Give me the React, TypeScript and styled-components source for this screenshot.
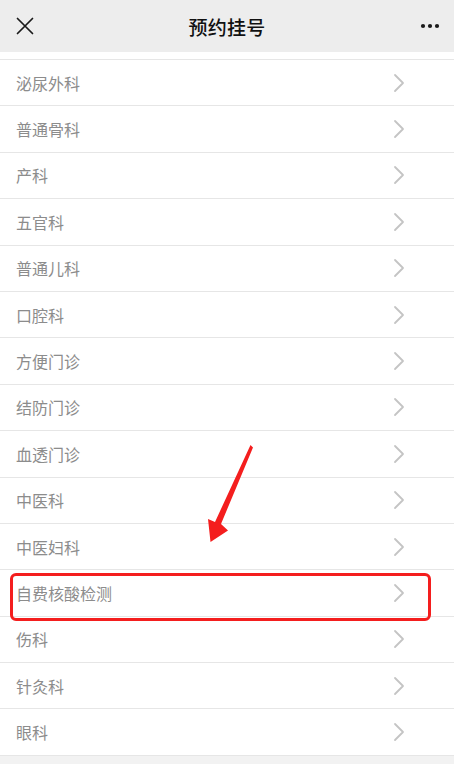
import React from "react";
import styled, { createGlobalStyle } from "styled-components";

const Global = createGlobalStyle`
  html, body { margin: 0; padding: 0; background: #f2f2f2; }
  body { font-family: "Noto Sans CJK SC", "Noto Sans", sans-serif; }
  * { box-sizing: border-box; }
`;

const Page = styled.div`
  position: relative;
  width: 454px;
  height: 764px;
  overflow: hidden;
  background: #f2f2f2;
`;

const Header = styled.header`
  height: 52px;
  background: #ededed;
  display: grid;
  grid-template-columns: 60px 1fr 60px;
  align-items: center;
`;

const Title = styled.div`
  text-align: center;
  font-size: 19px;
  font-weight: 500;
  color: #111;
  letter-spacing: 0.3px;
`;

const IconBox = styled.div<{ $align: "start" | "end" }>`
  display: flex;
  justify-content: ${(p) => (p.$align === "start" ? "flex-start" : "flex-end")};
  padding: ${(p) => (p.$align === "start" ? "0 0 0 16px" : "0 14px 0 0")};
  align-items: center;
`;

const TopStrip = styled.div`
  height: 8px;
  background: #fff;
  border-bottom: 1px solid #e6e6e6;
`;

const List = styled.ul`
  list-style: none;
  margin: 0;
  padding: 0;
  background: #fff;
`;

const Row = styled.li`
  height: 46.4px;
  display: flex;
  align-items: center;
  justify-content: space-between;
  padding: 0 49px 0 16px;
  border-bottom: 1px solid #e6e6e6;
  font-size: 16px;
  color: #8c8c8c;
`;

const Highlight = styled.div`
  position: absolute;
  left: 10px;
  top: 573px;
  width: 421px;
  height: 48px;
  border: 3px solid #f41e1e;
  border-radius: 6px;
  pointer-events: none;
`;

const ArrowSvg = styled.svg`
  position: absolute;
  left: 0;
  top: 0;
  pointer-events: none;
`;

const items = [
  "泌尿外科",
  "普通骨科",
  "产科",
  "五官科",
  "普通儿科",
  "口腔科",
  "方便门诊",
  "结防门诊",
  "血透门诊",
  "中医科",
  "中医妇科",
  "自费核酸检测",
  "伤科",
  "针灸科",
  "眼科",
];

const Chevron = () => (
  <svg width="12" height="20" viewBox="0 0 12 20">
    <path d="M2 2 L10 10 L2 18" fill="none" stroke="#c4c4c4" strokeWidth="1.8" strokeLinecap="round" strokeLinejoin="round" />
  </svg>
);

export default function App() {
  return (
    <Page>
      <Global />
      <Header>
        <IconBox $align="start">
          <svg width="18" height="18" viewBox="0 0 18 18">
            <path d="M1.5 1.5 L16.5 16.5 M16.5 1.5 L1.5 16.5" stroke="#1a1a1a" strokeWidth="1.7" strokeLinecap="round" />
          </svg>
        </IconBox>
        <Title>预约挂号</Title>
        <IconBox $align="end">
          <svg width="20" height="6" viewBox="0 0 20 6">
            <circle cx="3" cy="3" r="2.1" fill="#1a1a1a" />
            <circle cx="10" cy="3" r="2.1" fill="#1a1a1a" />
            <circle cx="17" cy="3" r="2.1" fill="#1a1a1a" />
          </svg>
        </IconBox>
      </Header>
      <TopStrip />
      <List>
        {items.map((t) => (
          <Row key={t}>
            <span>{t}</span>
            <Chevron />
          </Row>
        ))}
      </List>
      <Highlight />
      <ArrowSvg width="454" height="764" viewBox="0 0 454 764">
        <polygon points="250.5,445 253,447.5 221,524 228,530.5 210.5,542 208,519 215,522" fill="#f41e1e" />
      </ArrowSvg>
    </Page>
  );
}
